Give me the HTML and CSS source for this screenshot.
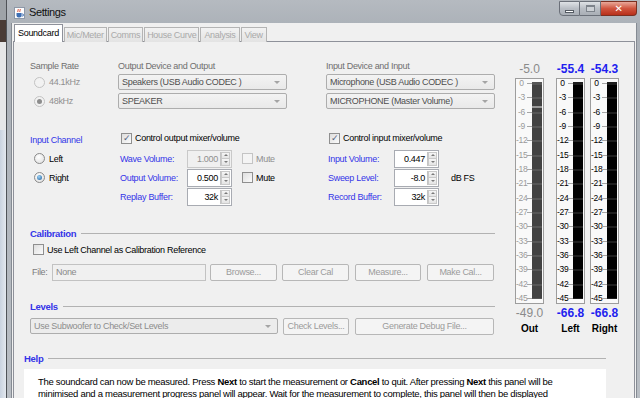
FILE: index.html
```html
<!DOCTYPE html>
<html>
<head>
    <meta charset="utf-8">
    <title>Settings</title>
    <link rel="stylesheet" href="styles.css">
</head>
<body>
    <div class="desk">
        <div class="desk-top"></div>
        <div class="desk-round"></div>
        <div class="desk-gap"></div>
        <div class="desk-list"></div>
    </div>

    <div class="window">
        <div class="titlebar">
            <svg class="app-icon" width="11" height="12" viewBox="0 0 11 12">
                <rect x="0.5" y="0.5" width="10" height="11" fill="#fdfdfd" stroke="#8d98a8"/>
                <path d="M4 2c1 1-1 2 0 3M6 2c1 1-1 2 0 3" stroke="#d8452b" fill="none"/>
                <path d="M2.5 6h5v2.5a2 2 0 0 1-2 2h-1a2 2 0 0 1-2-2z" fill="#3d6fb4"/>
                <path d="M7.5 7h1a1 1 0 0 1 0 2h-1" stroke="#3d6fb4" fill="none"/>
            </svg>
            <span class="win-title">Settings</span>
            <div class="caption">
                <div class="cap-btn cap-min"><span class="min-bar"></span></div>
                <div class="cap-btn cap-max"><span class="max-box"></span></div>
                <div class="cap-btn cap-close">&#x2715;</div>
            </div>
        </div>

        <div class="client">
            <div class="tabs">
                <div class="tab active">Soundcard</div>
                <div class="tab">Mic/Meter</div>
                <div class="tab">Comms</div>
                <div class="tab">House Curve</div>
                <div class="tab wider">Analysis</div>
                <div class="tab wider">View</div>
            </div>

            <div class="panel">
                <div class="upper">
                    <div class="controls">
                        <!-- sample rate and devices -->
                        <div class="devices">
                            <div class="rate-col">
                                <div class="small-label">Sample Rate</div>
                                <div class="opt disabled"><span class="radio"></span>44.1kHz</div>
                                <div class="opt disabled"><span class="radio on"></span>48kHz</div>
                            </div>
                            <div class="dev-col">
                                <div class="small-label">Output Device and Output</div>
                                <div class="combo">Speakers (USB Audio CODEC )</div>
                                <div class="combo">SPEAKER</div>
                            </div>
                            <div class="dev-col">
                                <div class="small-label">Input Device and Input</div>
                                <div class="combo">Microphone (USB Audio CODEC )</div>
                                <div class="combo">MICROPHONE (Master Volume)</div>
                            </div>
                        </div>

                        <!-- channel and mixer levels -->
                        <div class="mixers">
                            <div class="chan-col">
                                <div class="head-row"><span class="blue">Input Channel</span></div>
                                <div class="mix-row"><span class="radio"></span>Left</div>
                                <div class="mix-row"><span class="radio on blue-dot"></span>Right</div>
                            </div>
                            <div class="mix-col out-col">
                                <div class="head-row"><span class="check on"></span>Control output mixer/volume</div>
                                <div class="mix-row">
                                    <span class="mix-label blue">Wave Volume:</span>
                                    <div class="spin disabled"><span class="spin-val">1.000</span><span class="arrows"><i class="up"></i><i class="down"></i></span></div>
                                    <span class="mute disabled"><span class="check"></span>Mute</span>
                                </div>
                                <div class="mix-row">
                                    <span class="mix-label blue">Output Volume:</span>
                                    <div class="spin"><span class="spin-val">0.500</span><span class="arrows"><i class="up"></i><i class="down"></i></span></div>
                                    <span class="mute"><span class="check"></span>Mute</span>
                                </div>
                                <div class="mix-row">
                                    <span class="mix-label blue">Replay Buffer:</span>
                                    <div class="spin"><span class="spin-val">32k</span><span class="arrows"><i class="up"></i><i class="down"></i></span></div>
                                </div>
                            </div>
                            <div class="mix-col in-col">
                                <div class="head-row"><span class="check on"></span>Control input mixer/volume</div>
                                <div class="mix-row">
                                    <span class="mix-label blue">Input Volume:</span>
                                    <div class="spin"><span class="spin-val">0.447</span><span class="arrows"><i class="up"></i><i class="down"></i></span></div>
                                </div>
                                <div class="mix-row">
                                    <span class="mix-label blue">Sweep Level:</span>
                                    <div class="spin"><span class="spin-val">-8.0</span><span class="arrows"><i class="up"></i><i class="down"></i></span></div>
                                    <span class="unit">dB FS</span>
                                </div>
                                <div class="mix-row">
                                    <span class="mix-label blue">Record Buffer:</span>
                                    <div class="spin"><span class="spin-val">32k</span><span class="arrows"><i class="up"></i><i class="down"></i></span></div>
                                </div>
                            </div>
                        </div>

                        <!-- calibration -->
                        <div class="group cal-group">
                            <div class="group-head"><span class="group-title">Calibration</span><span class="rule"></span></div>
                            <div class="cal-check"><span class="check"></span>Use Left Channel as Calibration Reference</div>
                            <div class="btn-row">
                                <span class="file-label">File:</span>
                                <div class="field">None</div>
                                <div class="btn b-browse">Browse...</div>
                                <div class="btn b-clear">Clear Cal</div>
                                <div class="btn b-measure">Measure...</div>
                                <div class="btn b-make">Make Cal...</div>
                            </div>
                        </div>

                        <!-- levels -->
                        <div class="group lev-group">
                            <div class="group-head"><span class="group-title">Levels</span><span class="rule"></span></div>
                            <div class="btn-row">
                                <div class="combo wide">Use Subwoofer to Check/Set Levels</div>
                                <div class="btn b-check">Check Levels...</div>
                                <div class="btn b-debug">Generate Debug File...</div>
                            </div>
                        </div>
                    </div>

                    <!-- level meters -->
                    <div class="meters">
                        <div class="meter dim">
                            <div class="m-val">-5.0</div>
                            <div class="m-box">
                                <div class="scale">
                                    <div class="tick"><span>0</span><b></b></div>
                                    <div class="tick"><span>-3</span><b></b></div>
                                    <div class="tick"><span>-6</span><b></b></div>
                                    <div class="tick"><span>-9</span><b></b></div>
                                    <div class="tick"><span>-12</span><b></b></div>
                                    <div class="tick"><span>-15</span><b></b></div>
                                    <div class="tick"><span>-18</span><b></b></div>
                                    <div class="tick"><span>-21</span><b></b></div>
                                    <div class="tick"><span>-24</span><b></b></div>
                                    <div class="tick"><span>-27</span><b></b></div>
                                    <div class="tick"><span>-30</span><b></b></div>
                                    <div class="tick"><span>-33</span><b></b></div>
                                    <div class="tick"><span>-36</span><b></b></div>
                                    <div class="tick"><span>-39</span><b></b></div>
                                    <div class="tick"><span>-42</span><b></b></div>
                                    <div class="tick"><span>-45</span><b></b></div>
                                </div>
                                <div class="bar"><span class="peak"></span></div>
                            </div>
                            <div class="m-val">-49.0</div>
                            <div class="m-name">Out</div>
                        </div>
                        <div class="meter m-left">
                            <div class="m-val">-55.4</div>
                            <div class="m-box">
                                <div class="scale">
                                    <div class="tick"><span>0</span><b></b></div>
                                    <div class="tick"><span>-3</span><b></b></div>
                                    <div class="tick"><span>-6</span><b></b></div>
                                    <div class="tick"><span>-9</span><b></b></div>
                                    <div class="tick"><span>-12</span><b></b></div>
                                    <div class="tick"><span>-15</span><b></b></div>
                                    <div class="tick"><span>-18</span><b></b></div>
                                    <div class="tick"><span>-21</span><b></b></div>
                                    <div class="tick"><span>-24</span><b></b></div>
                                    <div class="tick"><span>-27</span><b></b></div>
                                    <div class="tick"><span>-30</span><b></b></div>
                                    <div class="tick"><span>-33</span><b></b></div>
                                    <div class="tick"><span>-36</span><b></b></div>
                                    <div class="tick"><span>-39</span><b></b></div>
                                    <div class="tick"><span>-42</span><b></b></div>
                                    <div class="tick"><span>-45</span><b></b></div>
                                </div>
                                <div class="bar"></div>
                            </div>
                            <div class="m-val">-66.8</div>
                            <div class="m-name">Left</div>
                        </div>
                        <div class="meter m-right">
                            <div class="m-val">-54.3</div>
                            <div class="m-box">
                                <div class="scale">
                                    <div class="tick"><span>0</span><b></b></div>
                                    <div class="tick"><span>-3</span><b></b></div>
                                    <div class="tick"><span>-6</span><b></b></div>
                                    <div class="tick"><span>-9</span><b></b></div>
                                    <div class="tick"><span>-12</span><b></b></div>
                                    <div class="tick"><span>-15</span><b></b></div>
                                    <div class="tick"><span>-18</span><b></b></div>
                                    <div class="tick"><span>-21</span><b></b></div>
                                    <div class="tick"><span>-24</span><b></b></div>
                                    <div class="tick"><span>-27</span><b></b></div>
                                    <div class="tick"><span>-30</span><b></b></div>
                                    <div class="tick"><span>-33</span><b></b></div>
                                    <div class="tick"><span>-36</span><b></b></div>
                                    <div class="tick"><span>-39</span><b></b></div>
                                    <div class="tick"><span>-42</span><b></b></div>
                                    <div class="tick"><span>-45</span><b></b></div>
                                </div>
                                <div class="bar"></div>
                            </div>
                            <div class="m-val">-66.8</div>
                            <div class="m-name">Right</div>
                        </div>
                    </div>
                </div>

                <!-- help -->
                <div class="help">
                    <div class="group-head"><span class="group-title">Help</span><span class="rule"></span></div>
                    <div class="help-box">
                        The soundcard can now be measured. Press <b>Next</b> to start the measurement or <b>Cancel</b> to quit. After pressing <b>Next</b> this panel will be<br>
                        minimised and a measurement progress panel will appear. Wait for the measurement to complete, this panel will then be displayed
                    </div>
                </div>
            </div>
        </div>
    </div>
</body>
</html>
```

FILE: styles.css
```css
* {
    margin: 0;
    padding: 0;
    box-sizing: border-box;
}
body {
    width: 640px;
    height: 398px;
    overflow: hidden;
    display: flex;
    background: #c9ced4;
    font-family: "Liberation Sans", Arial, sans-serif;
    font-size: 9px;
    letter-spacing: -0.3px;
    white-space: nowrap;
    color: #000;
}

/* background app peeking out on the left */
.desk {
    width: 6px;
    flex-shrink: 0;
    display: flex;
    flex-direction: column;
    background: #dfe4ea;
}
.desk-top { height: 20px; background: #9ea3a8; }
.desk-round { height: 22px; background: #4a3c36; }
.desk-gap { height: 88px; background: #e6e7e8; }
.desk-list { flex: 1; background: linear-gradient(90deg, #c9d3e0, #e3e8ee); }

/* window frame */
.window {
    flex: 1;
    min-height: 0;
    display: flex;
    flex-direction: column;
    border-left: 1px solid #4f5358;
    background: linear-gradient(#b5bac0, #aab0b7 30px, #b9bec4);
    padding: 0 3px 0 4px;
}
.titlebar {
    height: 23px;
    flex-shrink: 0;
    display: flex;
    align-items: center;
    padding-left: 3px;
}
.app-icon { margin-top: 2px; }
.win-title {
    font-size: 11px;
    letter-spacing: -0.4px;
    margin-left: 4px;
    margin-top: 1px;
    color: #111;
}
.caption {
    margin-left: auto;
    align-self: flex-start;
    display: flex;
    margin-top: 1px;
}
.cap-btn {
    height: 15px;
    border: 1px solid #6b7079;
    display: flex;
    align-items: center;
    justify-content: center;
}
.cap-min {
    width: 21px;
    border-radius: 0 0 0 4px;
    background: linear-gradient(#dfe2e6, #b9bec5 50%, #a9aeb5);
}
.cap-max {
    width: 21px;
    border-left: none;
    background: linear-gradient(#dfe2e6, #b9bec5 50%, #a9aeb5);
}
.cap-close {
    width: 36px;
    border-left: none;
    border-radius: 0 0 4px 0;
    border-color: #7b3022;
    background: linear-gradient(#e9a99a, #d0553f 50%, #b8301b);
    color: #fff;
    font-size: 10px;
    font-weight: bold;
    font-family: "DejaVu Sans", sans-serif;
}
.min-bar {
    width: 9px;
    height: 3px;
    margin-top: 5px;
    background: #fff;
    border: 1px solid #555b63;
}
.max-box {
    width: 9px;
    height: 7px;
    border: 1px solid #7d838b;
    border-top-width: 2px;
    background: #ccd0d5;
}

.client {
    flex: 1;
    min-height: 0;
    overflow: hidden;
    display: flex;
    flex-direction: column;
    background: #f0f0f0;
    border-left: 1px solid #858b93;
    border-right: 1px solid #858b93;
    padding: 2px 1px 0 1px;
}

/* tabs */
.tabs {
    display: flex;
    flex-shrink: 0;
    align-items: flex-end;
    padding-left: 1px;
    height: 17px;
    position: relative;
    z-index: 1;
    margin-bottom: -1px;
}
.tab {
    height: 15px;
    line-height: 14px;
    padding: 0 2px;
    border: 1px solid #b4b4b4;
    border-bottom: none;
    margin-right: 1px;
    background: linear-gradient(#f2f2f2, #e3e3e3);
    color: #a9a9a9;
}
.tab.wider { padding: 0 3px; }
.tab.active {
    height: 18px;
    line-height: 16px;
    padding: 0 3px;
    background: #fff;
    border-color: #8e919a;
    color: #000;
}

.panel {
    flex: 1;
    flex-shrink: 0;
    border: 1px solid #8e919a;
    border-bottom: none;
    background: #f0f0f0;
    padding: 19px 0 0 16px;
}
.upper {
    display: flex;
}
.controls {
    width: 465px;
}

.small-label {
    height: 10px;
    line-height: 10px;
    color: #6f6f6f;
    margin-bottom: 3px;
}
.blue { color: #3434e8; }

/* sample rate and devices */
.devices {
    display: flex;
}
.rate-col {
    width: 88px;
}
.dev-col {
    width: 169px;
    margin-right: 39px;
}
.dev-col:last-child { margin-right: 0; }
.opt {
    height: 16px;
    margin-bottom: 3px;
    display: flex;
    align-items: center;
    padding-left: 4px;
}
.disabled { color: #8f8f8f; }

.radio {
    width: 11px;
    height: 11px;
    border-radius: 50%;
    border: 1px solid #8a8a8a;
    background: radial-gradient(circle at 40% 35%, #ffffff, #dcdcdc);
    margin-right: 4px;
    display: inline-flex;
    align-items: center;
    justify-content: center;
    flex-shrink: 0;
}
.opt.disabled .radio {
    border-color: #c3c3c3;
    background: #f2f2f2;
}
.radio.on::after {
    content: "";
    width: 5px;
    height: 5px;
    border-radius: 50%;
    background: #8d8d8d;
}
.radio.blue-dot::after {
    background: radial-gradient(circle at 40% 35%, #9fd3f5, #1b5d9d);
}

.combo {
    height: 16px;
    margin-bottom: 3px;
    border: 1px solid #adadad;
    border-radius: 2px;
    background: linear-gradient(#f3f3f3, #e9e9e9);
    color: #4e4e4e;
    line-height: 14px;
    padding-left: 3px;
    display: flex;
    justify-content: space-between;
}
.combo::after {
    content: "";
    width: 0;
    height: 0;
    margin: 6px 6px 0 0;
    border-left: 3px solid transparent;
    border-right: 3px solid transparent;
    border-top: 3px solid #a4a4a4;
}

/* channel and mixer */
.mixers {
    display: flex;
    margin-top: 20px;
}
.chan-col {
    width: 90px;
}
.mix-col.out-col {
    width: 208px;
}
.head-row {
    height: 12px;
    margin-bottom: 5px;
    display: flex;
    align-items: center;
}
.chan-col .head-row { padding-top: 3px; }
.mix-row {
    height: 19px;
    display: flex;
    align-items: center;
}
.chan-col .mix-row { padding-left: 4px; }
.mix-label {
    width: 67px;
}
.in-col .mix-label { width: 66px; }

.check {
    width: 11px;
    height: 11px;
    border: 1px solid #8f8f8f;
    background: linear-gradient(135deg, #dedede, #fbfbfb);
    margin-right: 3px;
    display: inline-flex;
    align-items: center;
    justify-content: center;
    flex-shrink: 0;
}
.head-row .check { margin-left: 1px; }
.check.on::after {
    content: "\2713";
    font-family: "DejaVu Sans", sans-serif;
    font-size: 9px;
    line-height: 9px;
    color: #53627e;
}
.mute {
    display: flex;
    align-items: center;
    margin-left: 10px;
}
.mute.disabled .check {
    border-color: #c4c4c4;
    background: #f4f4f4;
}
.unit { margin-left: 12px; }

.spin {
    width: 45px;
    height: 18px;
    border: 1px solid #a8abb2;
    background: #fff;
    display: flex;
}
.spin.disabled { background: #f0f0f0; border-color: #c9c9c9; }
.spin-val {
    flex: 1;
    text-align: right;
    line-height: 16px;
    padding-right: 2px;
}
.arrows {
    width: 10px;
    display: flex;
    flex-direction: column;
    border-left: 1px solid #c4c4c4;
    margin: 1px 1px 1px 0;
}
.arrows i {
    flex: 1;
    display: flex;
    align-items: center;
    justify-content: center;
    background: linear-gradient(#f6f6f6, #e4e4e4);
    border: 1px solid #c9c9c9;
}
.arrows i + i { border-top: none; }
.arrows i::after {
    content: "";
    border-left: 2px solid transparent;
    border-right: 2px solid transparent;
}
.arrows .up::after { border-bottom: 2px solid #7a7a7a; }
.arrows .down::after { border-top: 2px solid #7a7a7a; }

/* titled groups */
.group-head {
    height: 12px;
    display: flex;
    align-items: center;
}
.group-title {
    color: #3434e8;
    font-weight: bold;
    font-size: 9.5px;
}
.rule {
    flex: 1;
    height: 1px;
    background: #b2b2b2;
    margin-left: 5px;
}
.cal-group { margin-top: 21px; }
.cal-check {
    height: 13px;
    margin-top: 4px;
    padding-left: 3px;
    display: flex;
    align-items: center;
}
.btn-row {
    height: 17px;
    margin-top: 6px;
    display: flex;
}
.cal-check + .btn-row { margin-top: 8px; }
.file-label {
    width: 22px;
    padding-left: 2px;
    line-height: 17px;
    color: #7c7c7c;
}
.field {
    width: 154px;
    border: 1px solid #c2c2c2;
    background: #f0f0f0;
    color: #8a8a8a;
    line-height: 15px;
    padding-left: 3px;
}
.btn {
    width: 67px;
    border: 1px solid #b7b7b7;
    border-radius: 2px;
    background: #f4f4f4;
    color: #9b9b9b;
    line-height: 15px;
    text-align: center;
}
.b-browse { margin-left: 4px; }
.b-clear { margin-left: 5px; }
.b-measure { margin-left: 6px; width: 66px; }
.b-make { margin-left: 6px; }
.lev-group { margin-top: 19px; }
.combo.wide {
    width: 248px;
    margin-bottom: 0;
    color: #8c8c8c;
    background: #ececec;
}
.b-check { margin-left: 5px; width: 66px; }
.b-debug { margin-left: 6px; width: 139px; }

/* meters */
.meters {
    display: flex;
    margin-left: 20px;
    margin-top: 1px;
    letter-spacing: 0;
}
.meter {
    width: 29px;
    display: flex;
    flex-direction: column;
    align-items: center;
}
.m-left { margin-left: 12px; }
.m-right { margin-left: 5px; }
.m-val {
    height: 16px;
    line-height: 14px;
    font-size: 12px;
    font-weight: bold;
    color: #1f1fef;
}
.dim .m-val {
    color: #8a8a8a;
    font-weight: normal;
}
.m-box {
    width: 29px;
    height: 226px;
    border: 1px solid #9d9d9d;
    background: #f9f9f9;
    display: flex;
}
.scale {
    width: 16px;
    display: flex;
    flex-direction: column;
    justify-content: space-between;
}
.tick {
    height: 9px;
    display: flex;
    align-items: center;
}
.tick span {
    width: 11px;
    text-align: center;
    font-size: 8.5px;
    line-height: 9px;
    letter-spacing: -0.3px;
}
.tick b {
    flex: 1;
    height: 1px;
    background: #a5a5a5;
}
.dim .tick span { color: #9a9a9a; }
.bar {
    width: 10px;
    margin: 3px 1px 4px 0;
    background: repeating-linear-gradient(#000 0 1px, #3a3a3a 1px 2px, #000 2px 14.33px);
    background-position: 0 0.5px;
    display: flex;
    flex-direction: column;
}
.dim .bar {
    background: repeating-linear-gradient(#424242 0 1px, #6a6a6a 1px 2px, #424242 2px 14.33px);
    background-position: 0 0.5px;
}
.peak {
    height: 2px;
    margin-top: 24px;
    background: #9a9a9a;
}
.m-box + .m-val { margin-top: 2px; }
.m-name {
    font-size: 10px;
    font-weight: bold;
    line-height: 12px;
    margin-top: 1px;
}

/* help */
.help {
    width: 582px;
    margin: 17px 0 0 -6px;
}
.help-box {
    margin-top: 5px;
    background: #fff;
    padding: 7px 14px 0;
    font-size: 9.5px;
    line-height: 12px;
    height: 40px;
}
```
